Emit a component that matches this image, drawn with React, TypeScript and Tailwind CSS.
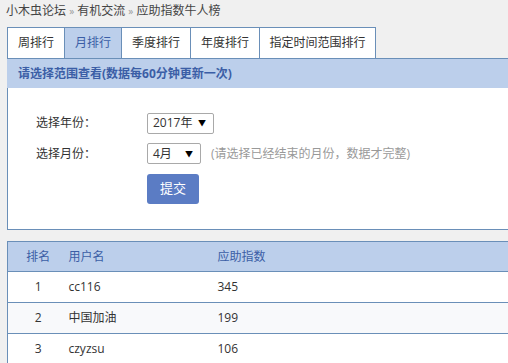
import React from 'react';

const tabs = ['周排行', '月排行', '季度排行', '年度排行', '指定时间范围排行'];

const rows = [
  { rank: 1, name: 'cc116', score: 345 },
  { rank: 2, name: '中国加油', score: 199 },
  { rank: 3, name: 'czyzsu', score: 106 },
];

const Caret = () => <span className="text-[8px] text-black">▼</span>;

const App: React.FC = () => {
  return (
    <main
      className="w-[508px] h-[363px] overflow-hidden bg-[#f0f0f0] text-[12px] text-[#333]"
      style={{ fontFamily: '"Open Sans", "Noto Sans CJK SC", sans-serif' }}
    >
      <div className="h-[27px] pl-[6px] pt-[1px] leading-[20px] text-[#444]">
        小木虫论坛 <span className="text-[#999] text-[10px]">»</span> 有机交流{' '}
        <span className="text-[#999] text-[10px]">»</span> 应助指数牛人榜
      </div>

      <div className="ml-[7px]">
        <div className="flex h-[32px] border-b border-[#6a8fb8]">
          {tabs.map((t, i) => (
            <div
              key={t}
              className={`flex items-center justify-center border-t border-l border-[#6a8fb8] ${
                i === tabs.length - 1 ? 'border-r' : ''
              } ${i === 1 ? 'bg-[#bccfeb] text-[#3b5ea6]' : 'bg-white text-[#333]'} ${
                ['w-[57px]', 'w-[57px]', 'w-[69px]', 'w-[69px]', 'w-[117px]'][i]
              }`}
            >
              {t}
            </div>
          ))}
        </div>

        <div className="h-[29px] bg-[#bccfeb] pl-[11px] leading-[29px] font-bold text-[#3b5ea6]">
          请选择范围查看(数据每60分钟更新一次)
        </div>

        <section className="h-[142px] bg-white border-l border-b border-[#6a8fb8] pt-[25px] pl-[28px]">
          <div className="flex items-center h-[20px]">
            <span className="w-[111px]">选择年份：</span>
            <div className="flex items-center justify-between w-[67px] h-[21px] border border-[#a9a9a9] rounded-[2px] pl-[5px] pr-[7px]">
              <span>2017年</span>
              <Caret />
            </div>
          </div>
          <div className="flex items-center h-[21px] mt-[10px]">
            <span className="w-[111px]">选择月份：</span>
            <div className="flex items-center justify-between w-[54px] h-[21px] border border-[#a9a9a9] rounded-[2px] pl-[5px] pr-[7px]">
              <span>4月</span>
              <Caret />
            </div>
            <span className="ml-[10px] text-[#999]">(请选择已经结束的月份，数据才完整)</span>
          </div>
          <button className="mt-[10px] ml-[111px] w-[52px] h-[30px] rounded-[3px] bg-[#5b7cc4] text-white text-[13px]">
            提交
          </button>
        </section>

        <table className="mt-[11px] w-[501px] bg-white border-l border-[#6a8fb8] border-collapse">
          <thead>
            <tr className="h-[30px] bg-[#bccfeb] text-[#3b5ea6] border-t border-b border-[#6a8fb8]">
              <th className="w-[59px] pl-[2px] font-normal text-center">排名</th>
              <th className="w-[149px] pl-[2px] font-normal text-left">用户名</th>
              <th className="pl-[2px] font-normal text-left">应助指数</th>
            </tr>
          </thead>
          <tbody>
            {rows.map((r, i) => (
              <tr
                key={r.rank}
                className={`h-[31px] border-b border-[#6a8fb8] ${i % 2 === 1 ? 'bg-[#f8f9fb]' : 'bg-white'}`}
              >
                <td className="pl-[2px] text-center">{r.rank}</td>
                <td className="pl-[2px]">{r.name}</td>
                <td className="pl-[2px]">{r.score}</td>
              </tr>
            ))}
          </tbody>
        </table>
      </div>
    </main>
  );
};

export default App;
